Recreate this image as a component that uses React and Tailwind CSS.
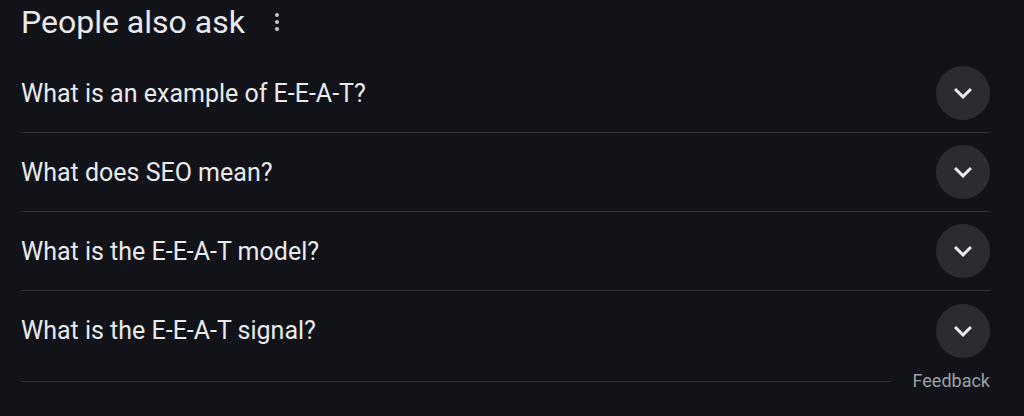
import React from 'react';

const questions = [
    'What is an example of E-E-A-T?',
    'What does SEO mean?',
    'What is the E-E-A-T model?',
    'What is the E-E-A-T signal?',
];

const Chevron = () => (
    <svg viewBox="0 0 24 24" className="w-9 h-9 fill-[#e8eaed]">
        <path d="M7.41 8.59L12 13.17l4.59-4.58L18 10l-6 6-6-6 1.41-1.41z" />
    </svg>
);

const App = () => {
    return (
        <div className="w-[1024px] h-[416px] bg-[#121318] pl-[21px] pr-[34px] overflow-hidden" style={{ fontFamily: 'Roboto, "Open Sans", sans-serif' }}>
            {/* Heading */}
            <div className="h-[44px] mb-[10px] flex items-center">
                <h2 className="text-[32px] leading-none text-[#e8eaed]">People also ask</h2>
                <div className="ml-[30px] flex flex-col gap-[3px]">
                    <span className="block w-[4px] h-[4px] rounded-full bg-[#c4c7c5]" />
                    <span className="block w-[4px] h-[4px] rounded-full bg-[#c4c7c5]" />
                    <span className="block w-[4px] h-[4px] rounded-full bg-[#c4c7c5]" />
                </div>
            </div>

            {/* Questions */}
            <div>
                {questions.map((q, i) => (
                    <div
                        key={q}
                        className={`h-[79px] flex items-center justify-between ${i < questions.length - 1 ? 'border-b border-[#303134]' : ''}`}
                    >
                        <span className="text-[25px] leading-none text-[#e8eaed]">{q}</span>
                        <div className="w-[54px] h-[54px] rounded-full bg-[#2a2c32] flex items-center justify-center">
                            <Chevron />
                        </div>
                    </div>
                ))}
            </div>

            {/* Footer */}
            <div className="h-[22px] flex items-center gap-[22px]">
                <div className="flex-1 h-px bg-[#303134]" />
                <span className="text-[18px] leading-none text-[#9aa0a6]">Feedback</span>
            </div>
        </div>
    );
};

export default App;
